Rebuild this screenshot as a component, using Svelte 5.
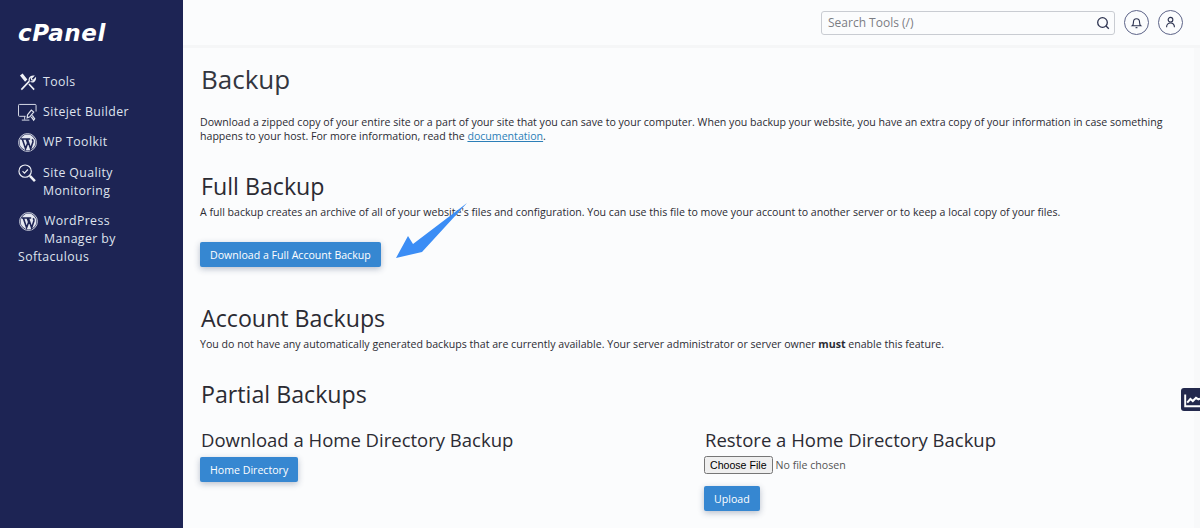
<script lang="ts">
	const navItems = [
		{ id: 'tools', label: 'Tools' },
		{ id: 'sitejet', label: 'Sitejet Builder' },
		{ id: 'wp', label: 'WP Toolkit' },
		{ id: 'quality', label: 'Site Quality Monitoring' }
	];
</script>

{#snippet wpIcon()}
	<svg class="icon" viewBox="0 0 20 20" fill="none">
		<circle cx="10" cy="10" r="9.400" stroke="#e4e7f0" stroke-width="0.900" />
		<circle cx="10" cy="10" r="8.300" fill="#e4e7f0" />
		<path d="M2.800 6.300h5.400M4.600 6.500l3.400 10 2.200-6-1.300-3.800M8.200 6.300h4.600M9.900 6.500l3.400 10 2.400-7c.3-1.100-.1-2-.8-3" stroke="#1d2454" stroke-width="1.700" />
	</svg>
{/snippet}

<div class="page">
	<aside class="sidebar">
		<div class="logo">cPanel</div>
		<nav>
			{#each navItems as item}
				<a class="nav-item" class:quality={item.id === 'quality'} href="#{item.id}">
					{#if item.id === 'tools'}
						<svg class="icon" viewBox="0 0 20 20" fill="none" stroke="#f0f2f7" stroke-width="1.700">
							<path d="M3.500 17.500l8.500-9" />
							<path d="M12 8.500c-1-2.400.8-5.600 4.300-5.300l-2.300 2.300.5 1.700 1.700.5 2.200-2.300c.2 3.100-2.800 4.800-5.200 3.600" stroke-width="1.300" />
							<path d="M3.300 2.800l1.400-1 4 5-1.200 1.100zM11.500 11.500l5.500 6" />
						</svg>
					{:else if item.id === 'sitejet'}
						<svg class="icon" viewBox="0 0 20 20" fill="none" stroke="#dfe3ee" stroke-width="1">
							<path d="M8 14H1.500A1 1 0 0 1 .5 13V2.500a1 1 0 0 1 1-1H18a1 1 0 0 1 1 1V9" />
							<path d="M7 14v3.500M4 18h8" />
							<path d="M10 12.500l4-5 2.500 2-4 5-2.800 1zM15 13l2.500 3.500-1 1.500-2.500-3.500" stroke-width="1.300" />
						</svg>
					{:else if item.id === 'wp'}
						{@render wpIcon()}
					{:else}
						<svg class="icon" viewBox="0 0 20 20" fill="none" stroke="#f0f2f7" stroke-width="1.200">
							<circle cx="7.500" cy="7.500" r="6.500" />
							<path d="M4.800 7.600l2 2 3.600-3.800" />
							<path d="M12.500 12.500l5.300 5.500" stroke-width="2.600" />
						</svg>
					{/if}
					<span>{item.label}</span>
				</a>
			{/each}
			<a class="nav-item softaculous" href="#softaculous">
				{@render wpIcon()}WordPress Manager by Softaculous
			</a>
		</nav>
	</aside>

	<div class="main">
		<header class="topbar">
			<div class="search">
				<input type="text" placeholder="Search Tools (/)" />
				<svg viewBox="0 0 16 16" fill="none" stroke="#2d3350" stroke-width="1.300">
					<circle cx="7.500" cy="7.500" r="4.800" />
					<path d="M11 11l2.800 2.800" />
				</svg>
			</div>
			<button class="round" aria-label="Notifications">
				<svg viewBox="0 0 16 16" fill="none" stroke="#2d3350" stroke-width="1.200">
					<path d="M3.500 11.500c1-.8 1.200-1.500 1.200-3.500 0-2.400 1.300-4 3.300-4s3.300 1.600 3.300 4c0 2 .2 2.700 1.200 3.500z" />
					<path d="M7 13.500h2" />
				</svg>
			</button>
			<button class="round" aria-label="Account">
				<svg viewBox="0 0 16 16" fill="none" stroke="#2d3350" stroke-width="1.200">
					<circle cx="8" cy="5" r="2.500" />
					<path d="M3.800 13c0-3 1.700-4.500 4.200-4.500s4.200 1.500 4.200 4.500" />
				</svg>
			</button>
		</header>

		<main class="content">
			<h1>Backup</h1>
			<p class="intro">
				Download a zipped copy of your entire site or a part of your site that you can save to your computer. When you backup your website, you have an extra copy of your information in case something happens to your host. For more information, read the <a href="#docs">documentation</a>.
			</p>

			<section class="full">
				<h2>Full Backup</h2>
				<p>A full backup creates an archive of all of your website's files and configuration. You can use this file to move your account to another server or to keep a local copy of your files.</p>
				<button class="primary">Download a Full Account Backup</button>
				<svg class="arrow" viewBox="0 0 72 56">
					<path d="M71 0 26 49 0 55 12 33 17 41z" fill="#3b8df5" />
				</svg>
			</section>

			<section class="account">
				<h2>Account Backups</h2>
				<p>You do not have any automatically generated backups that are currently available. Your server administrator or server owner <strong>must</strong> enable this feature.</p>
			</section>

			<section class="partial">
				<h2>Partial Backups</h2>
				<div class="columns">
					<div>
						<h3>Download a Home Directory Backup</h3>
						<button class="primary">Home Directory</button>
					</div>
					<div>
						<h3>Restore a Home Directory Backup</h3>
						<input class="file" type="file" />
						<button class="primary upload">Upload</button>
					</div>
				</div>
			</section>
		</main>
	</div>

	<div class="edge"></div>
	<button class="stats" aria-label="Statistics">
		<svg viewBox="0 0 20 20" fill="none" stroke="#fff">
			<path d="M1.500 2v14.500H20" stroke-width="2.400" />
			<path d="M4 12l4-4.500 3 2.500 4-4 3 2 2-1" stroke-width="2.600" />
		</svg>
	</button>
</div>

<style>
	:global(body) {
		margin: 0;
		overflow: hidden;
	}
	.page {
		position: relative;
		display: flex;
		width: 1200px;
		height: 528px;
		overflow: hidden;
		background: #fbfcfd;
		color: #2b2b33;
		font-family: "Open Sans", sans-serif;
		font-size: 10.600px;
	}
	.sidebar {
		flex: 0 0 183px;
		box-sizing: border-box;
		padding: 16px 18px 0;
		background: #1d2454;
		color: #dfe3ee;
	}
	.logo {
		height: 36px;
		color: #fff;
		font-family: "DejaVu Sans", sans-serif;
		font-size: 23px;
		font-weight: 700;
		font-style: italic;
		line-height: 34px;
		letter-spacing: 0.6px;
	}
	nav {
		display: flex;
		flex-direction: column;
		gap: 12px;
		margin-top: 21px;
	}
	.nav-item {
		display: flex;
		align-items: flex-start;
		gap: 6px;
		color: #dfe3ee;
		font-size: 12.300px;
		line-height: 18px;
		letter-spacing: 0.4px;
		text-decoration: none;
	}
	.icon {
		flex: none;
		width: 19px;
		height: 19px;
		margin-bottom: -1px;
	}
	.quality {
		margin-top: 1px;
	}
	.softaculous {
		display: block;
	}
	.softaculous .icon {
		float: left;
		margin: 0 6px 0 1px;
	}
	.main {
		flex: 1;
		min-width: 0;
		display: flex;
		flex-direction: column;
	}
	.topbar {
		display: flex;
		flex: none;
		align-items: center;
		justify-content: flex-end;
		gap: 9px;
		box-sizing: border-box;
		height: 48px;
		padding: 0 17px 0 0;
		border-bottom: 3px solid #f5f6f7;
	}
	.search {
		position: relative;
		width: 294px;
		height: 24px;
		box-sizing: border-box;
		border: 1px solid #c9ccd2;
		border-radius: 3px;
		background: #fbfcfd;
	}
	.search input {
		width: 100%;
		height: 100%;
		box-sizing: border-box;
		padding: 0 28px 0 6px;
		border: 0;
		background: transparent;
		font: 12px "Open Sans", sans-serif;
	}
	.search input::placeholder {
		color: #7b7d84;
		opacity: 1;
	}
	.search svg {
		position: absolute;
		top: 3px;
		right: 3px;
		width: 16px;
		height: 16px;
	}
	.round {
		display: grid;
		place-items: center;
		width: 25px;
		height: 25px;
		padding: 0;
		border: 1px solid #5d6488;
		border-radius: 50%;
		background: transparent;
	}
	.round svg {
		width: 15px;
		height: 15px;
	}
	.content {
		flex: 1;
		padding: 0 18px 0 17px;
	}
	h1 {
		margin: 13px 0 0;
		padding-left: 1px;
		color: #33363f;
		font-size: 26px;
		font-weight: 400;
		line-height: 36px;
	}
	h2 {
		margin: 0;
		padding-left: 1px;
		font-size: 23.200px;
		font-weight: 400;
		line-height: 30px;
	}
	h3 {
		margin: 0;
		padding-left: 1px;
		font-size: 18.500px;
		font-weight: 400;
		line-height: 24px;
	}
	p {
		margin: 0;
		line-height: 14px;
	}
	.intro {
		margin-top: 18px;
	}
	.intro a {
		color: #2c7fb8;
	}
	.full {
		position: relative;
		margin-top: 28px;
	}
	.full p {
		margin-top: 4px;
	}
	.full .primary {
		margin-top: 23px;
		display: block;
	}
	.arrow {
		position: absolute;
		left: 196px;
		top: 32px;
		width: 72px;
		height: 56px;
	}
	.primary {
		height: 25px;
		padding: 0 10px;
		border: 0;
		border-radius: 2px;
		background: #3687d1;
		color: #fff;
		font: 10.600px "Open Sans", sans-serif;
		box-shadow: 0 2px 6px rgba(30, 50, 90, 0.3);
	}
	.account {
		margin-top: 36px;
	}
	.account p {
		margin-top: 4px;
	}
	.partial {
		margin-top: 28px;
	}
	.columns {
		display: grid;
		grid-template-columns: 504px 1fr;
		margin-top: 19px;
	}
	.columns .primary {
		display: block;
		margin-top: 5px;
	}
	.file {
		display: block;
		margin-top: 4px;
		color: #555;
		font: 10.600px "Open Sans", sans-serif;
	}
	.file::file-selector-button {
		height: 18px;
		padding: 0 4px;
		margin-right: 3px;
		font: 10.600px "Liberation Sans", sans-serif;
	}
	.columns .upload {
		margin-top: 12px;
	}
	.edge {
		position: absolute;
		top: 48px;
		right: 0;
		bottom: 0;
		width: 6px;
		background: #f8f9fa;
	}
	.stats {
		position: absolute;
		top: 388px;
		right: 0;
		width: 19px;
		height: 23px;
		padding: 3px 0 0 3px;
		border: 0;
		border-radius: 3px 0 0 3px;
		background: #23294d;
	}
	.stats svg {
		display: block;
		width: 16px;
		height: 16px;
	}
</style>
